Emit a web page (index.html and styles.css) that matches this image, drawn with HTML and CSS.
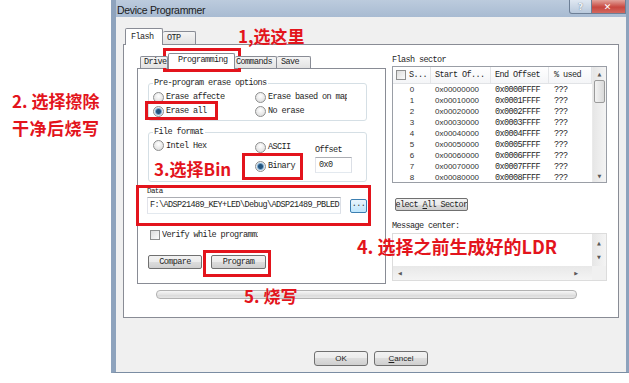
FILE: index.html
```html
<!DOCTYPE html>
<html lang="zh-CN">
<head>
    <meta charset="UTF-8">
    <title>Device Programmer</title>
    <link rel="stylesheet" href="styles.css">
</head>
<body>
    <!-- Окно программатора -->
    <div class="window">
        <div class="titlebar">
            <span class="title">Device Programmer</span>
            <div class="caption-btns">
                <span class="cap-help">?</span>
                <span class="cap-close">&#x2715;</span>
            </div>
        </div>

        <div class="client">
            <div class="tabs outer-tabs">
                <div class="tab active tab-flash">Flash</div>
                <div class="tab tab-otp">OTP</div>
            </div>

            <div class="outer-page">
                <div class="top-row">
                    <!-- Левая часть: вкладки Driver / Programming ... -->
                    <div class="inner">
                        <div class="tabs inner-tabs">
                            <div class="tab tab-driver">Driver</div>
                            <div class="tab active tab-prog">Programming</div>
                            <div class="tab tab-cmd">Commands</div>
                            <div class="tab tab-save">Save</div>
                        </div>
                        <div class="inner-page">
                            <fieldset class="group erase-group">
                                <legend>Pre-program erase options</legend>
                                <div class="opts">
                                    <label class="radio"><i></i><span class="clip w59">Erase affected sectors</span></label>
                                    <label class="radio"><i></i><span class="clip w79">Erase based on map</span></label>
                                    <label class="radio"><i class="on"></i><span class="clip w44">Erase all</span></label>
                                    <label class="radio"><i></i><span>No erase</span></label>
                                </div>
                            </fieldset>

                            <fieldset class="group format-group">
                                <legend>File format</legend>
                                <div class="format">
                                    <label class="radio hex"><i></i><span>Intel Hex</span></label>
                                    <label class="radio ascii"><i></i><span>ASCII</span></label>
                                    <span class="offset-label">Offset</span>
                                    <span></span>
                                    <label class="radio"><i class="on"></i><span>Binary</span></label>
                                    <div class="textbox offset">0x0</div>
                                </div>
                            </fieldset>

                            <div class="data-label">Data</div>
                            <div class="data-row">
                                <div class="textbox path">F:\ADSP21489_KEY+LED\Debug\ADSP21489_PBLED</div>
                                <div class="browse">...</div>
                            </div>

                            <label class="check verify"><i></i><span class="clip w96">Verify while programming</span></label>

                            <div class="btn-row">
                                <div class="btn compare">Compare</div>
                                <div class="btn program">Program</div>
                            </div>
                        </div>
                    </div>

                    <!-- Правая часть: сектора и сообщения -->
                    <div class="sector-col">
                        <div class="caption">Flash sector</div>
                        <div class="list">
                            <div class="list-body">
                                <div class="lrow head">
                                    <div class="c0"><i class="box"></i>S...</div>
                                    <div class="c1">Start Of...</div>
                                    <div class="c2">End Offset</div>
                                    <div class="c3">% used</div>
                                </div>
                                <div class="lrow"><div class="c0 num">0</div><div class="c1 num">0x00000000</div><div class="c2">0x0000FFFF</div><div class="c3">???</div></div>
                                <div class="lrow"><div class="c0 num">1</div><div class="c1 num">0x00010000</div><div class="c2">0x0001FFFF</div><div class="c3">???</div></div>
                                <div class="lrow"><div class="c0 num">2</div><div class="c1 num">0x00020000</div><div class="c2">0x0002FFFF</div><div class="c3">???</div></div>
                                <div class="lrow"><div class="c0 num">3</div><div class="c1 num">0x00030000</div><div class="c2">0x0003FFFF</div><div class="c3">???</div></div>
                                <div class="lrow"><div class="c0 num">4</div><div class="c1 num">0x00040000</div><div class="c2">0x0004FFFF</div><div class="c3">???</div></div>
                                <div class="lrow"><div class="c0 num">5</div><div class="c1 num">0x00050000</div><div class="c2">0x0005FFFF</div><div class="c3">???</div></div>
                                <div class="lrow"><div class="c0 num">6</div><div class="c1 num">0x00060000</div><div class="c2">0x0006FFFF</div><div class="c3">???</div></div>
                                <div class="lrow"><div class="c0 num">7</div><div class="c1 num">0x00070000</div><div class="c2">0x0007FFFF</div><div class="c3">???</div></div>
                                <div class="lrow"><div class="c0 num">8</div><div class="c1 num">0x00080000</div><div class="c2">0x0008FFFF</div><div class="c3">???</div></div>
                            </div>
                            <div class="vscroll">
                                <span class="arr">&#9650;</span>
                                <span class="thumb"></span>
                                <span class="arr down">&#9660;</span>
                            </div>
                        </div>

                        <div class="btn select-all"><span>Select <u>A</u>ll Sector</span></div>

                        <div class="caption msg-caption">Message center:</div>
                        <div class="msgbox">
                            <div class="msg-main">
                                <div class="msg-text"></div>
                                <div class="msg-v">
                                    <span class="arr">&#9650;</span>
                                    <span class="arr">&#9660;</span>
                                </div>
                            </div>
                            <div class="msg-h">
                                <span class="arr">&#9664;</span>
                                <span class="arr">&#9654;</span>
                                <span class="corner"></span>
                            </div>
                        </div>
                    </div>
                </div>

                <div class="progress"></div>
            </div>

            <div class="dlg-btns">
                <div class="btn dlg">OK</div>
                <div class="btn dlg"><span><u>C</u>ancel</span></div>
            </div>
        </div>
    </div>

    <!-- Пометки поверх скриншота -->
    <div class="mark m-prog"></div>
    <div class="mark m-erase"></div>
    <div class="mark m-bin"></div>
    <div class="mark m-data"></div>
    <div class="mark m-program"></div>

    <div class="note n1">1,选这里</div>
    <div class="note n2">2. 选择擦除</div>
    <div class="note n2b">干净后烧写</div>
    <div class="note n3">3.选择Bin</div>
    <div class="note n4">4. 选择之前生成好的LDR</div>
    <div class="note n5">5. 烧写</div>
</body>
</html>
```

FILE: styles.css
```css
* {
    box-sizing: border-box;
}

body {
    margin: 0;
    width: 629px;
    height: 383px;
    overflow: hidden;
    position: relative;
    background: #fff;
    font-family: "Liberation Mono", monospace;
    font-size: 8.5px;
    letter-spacing: -0.6px;
    color: #1e1e1e;
}

/* Окно */
.window {
    margin-left: 111px;
    width: 520px;
    height: 373px;
    border-left: 5px solid #8ea3bd;
    border-right: 5px solid #8ea3bd;
    border-bottom: 1px solid #7b8da3;
    background: #f0f0f0;
    display: flex;
    flex-direction: column;
}

.titlebar {
    height: 17px;
    background: linear-gradient(#bccbdd, #a8bbd2);
    display: flex;
    align-items: flex-start;
}

.title {
    font-family: "Liberation Sans", sans-serif;
    font-size: 10.5px;
    letter-spacing: -0.3px;
    line-height: 14px;
    padding-top: 3px;
    padding-left: 1px;
    color: #1b1b1b;
}

.caption-btns {
    margin-left: auto;
    display: flex;
}

.cap-help,
.cap-close {
    height: 14px;
    display: flex;
    align-items: center;
    justify-content: center;
    font-family: "DejaVu Sans", sans-serif;
    letter-spacing: 0;
    color: #fff;
    border: 1px solid #6d7f96;
    border-top: none;
}

.cap-help {
    width: 23px;
    border-radius: 0 0 0 3px;
    background: linear-gradient(#dfe7f1, #b9c9dc);
    font-size: 9px;
    font-weight: bold;
    color: #eef3f8;
    text-shadow: 0 0 1px #50627a;
}

.cap-close {
    width: 34px;
    border-left: none;
    background: linear-gradient(#e2a49c, #c8473f 55%, #d2685f);
    font-size: 9px;
    font-weight: bold;
    padding-right: 2px;
}

.client {
    flex: 1;
    padding: 11px 7px 0 7px;
    display: flex;
    flex-direction: column;
}

/* Вкладки */
.tabs {
    display: flex;
    align-items: flex-end;
    position: relative;
    z-index: 1;
}

.tab {
    height: 13px;
    border: 1px solid #898c95;
    border-bottom: none;
    border-radius: 2px 2px 0 0;
    background: linear-gradient(#f5f5f5, #e2e2e2);
    line-height: 12px;
    white-space: nowrap;
    overflow: hidden;
}

.tab.active {
    background: #fff;
    margin-bottom: -1px;
}

.outer-tabs {
    height: 16px;
    padding-left: 2px;
}

.tab-flash {
    width: 38px;
    height: 17px;
    padding-left: 5px;
    line-height: 16px;
}

.tab-otp {
    width: 33px;
    padding-left: 4px;
    border-left: none;
}

.outer-page {
    width: 496px;
    height: 274px;
    border: 1px solid #898c95;
    background: #fff;
    padding: 8px 11px 0 13px;
}

.top-row {
    display: flex;
    gap: 6px;
}

.inner {
    width: 249px;
}

.inner-tabs {
    height: 15px;
    padding-left: 3px;
}

.tab-driver {
    width: 28px;
    height: 12px;
    padding-left: 3px;
    line-height: 11px;
}

.tab-prog {
    width: 67px;
    height: 16px;
    padding-left: 9px;
    line-height: 13px;
}

.tab-cmd {
    width: 42px;
    height: 12px;
    padding-left: 1px;
    line-height: 11px;
    border-left: none;
}

.tab-save {
    width: 34px;
    height: 12px;
    padding-left: 4px;
    line-height: 11px;
    border-left: none;
}

.inner-page {
    height: 216px;
    border: 1px solid #898c95;
    background: #fff;
}

/* Группы */
.group {
    width: 219px;
    margin: 9px 0 0 10px;
    padding: 0 0 2px 4px;
    border: 1px solid #d5dfe5;
    border-radius: 3px;
}

.group legend {
    padding: 0 1px;
    line-height: 10px;
}

.opts {
    display: grid;
    grid-template-columns: 102px auto;
    grid-auto-rows: 14px;
    align-items: center;
    padding-top: 2px;
}

.radio,
.check {
    display: flex;
    align-items: center;
    gap: 2px;
    white-space: nowrap;
}

.radio i {
    width: 11px;
    height: 11px;
    flex: none;
    border-radius: 50%;
    border: 1px solid #8e8f8f;
    background: radial-gradient(circle at 50% 35%, #fff, #d6d6d6);
}

.radio i.on {
    background: radial-gradient(circle, #24547e 0 2px, #78a8cf 3px, #e4ebf1 4px);
}

.clip {
    overflow: hidden;
    white-space: nowrap;
}

.w44 { width: 44px; }
.w59 { width: 59px; }
.w79 { width: 79px; }
.w96 { width: 96px; }

.format-group {
    margin-top: 6px;
    padding-bottom: 6px;
}

.format {
    display: grid;
    grid-template-columns: 102px 60px auto;
    grid-template-rows: 20px 18px;
}

.format .hex {
    align-self: start;
    margin-top: 3px;
}

.format .ascii {
    align-self: center;
}

.offset-label {
    align-self: end;
    padding-bottom: 2px;
}

.textbox {
    border: 1px solid #abadb3;
    border-color: #abadb3 #dbdfe6 #e3e9ef #e2e3ea;
    background: #fff;
    white-space: nowrap;
    overflow: hidden;
}

.offset {
    width: 37px;
    height: 16px;
    padding-left: 3px;
    line-height: 14px;
}

.data-label {
    margin: 5px 0 0 9px;
    line-height: 9px;
    font-size: 7.5px;
}

.data-row {
    display: flex;
    align-items: center;
    margin: 1px 0 0 9px;
}

.path {
    width: 194px;
    height: 17px;
    padding-left: 2px;
    line-height: 15px;
}

.browse {
    width: 17px;
    height: 14px;
    margin-left: 9px;
    border: 1px solid #3c7fb1;
    border-radius: 2px;
    background: linear-gradient(#eaf6fd, #bee6fd);
    line-height: 8px;
    text-align: center;
    color: #333;
}

.check i {
    width: 10px;
    height: 10px;
    flex: none;
    border: 1px solid #8e8f8f;
    background: linear-gradient(135deg, #dcdcdc, #fbfbfb);
}

.verify {
    margin: 16px 0 0 12px;
    height: 10px;
}

.btn-row {
    display: flex;
    margin: 15px 0 0 10px;
    gap: 9px;
}

.btn {
    height: 14px;
    border: 1px solid #707070;
    border-radius: 2px;
    background: linear-gradient(#f2f2f2, #ebebeb 50%, #dddddd 50%, #cfcfcf);
    display: flex;
    align-items: center;
    justify-content: center;
    white-space: nowrap;
    overflow: hidden;
}

.compare { width: 54px; }
.program { width: 55px; }

/* Сектора */
.sector-col {
    width: 215px;
    display: flex;
    flex-direction: column;
}

.caption {
    margin-top: 3px;
    line-height: 9px;
}

.list {
    margin-top: 1px;
    height: 117px;
    border: 1px solid #9a9ea6;
    display: flex;
    overflow: hidden;
}

.list-body {
    flex: 1;
}

.lrow {
    display: flex;
    height: 11px;
    align-items: center;
}

.lrow.head {
    height: 17px;
    background: linear-gradient(#fff, #f4f5f7);
    border-bottom: 1px solid #e1e3e6;
}

.lrow > div {
    height: 100%;
    display: flex;
    align-items: center;
    white-space: nowrap;
}

.head > div {
    border-right: 1px solid #e3e5e8;
}

.c0 { width: 38px; justify-content: center; }
.c1 { width: 60px; padding-left: 4px; }
.c2 { width: 58px; padding-left: 4px; }
.c3 { width: 43px; padding-left: 5px; }

.head .c0 {
    justify-content: flex-start;
    padding-left: 3px;
    gap: 3px;
}

.box {
    width: 10px;
    height: 10px;
    border: 1px solid #8e8f8f;
    background: linear-gradient(135deg, #dcdcdc, #fbfbfb);
}

.num {
    font-family: "Liberation Sans", sans-serif;
    font-size: 8px;
    letter-spacing: 0;
    color: #333;
}

.vscroll,
.msg-v {
    width: 14px;
    background: linear-gradient(90deg, #e6e6e6, #f4f4f4);
    display: flex;
    flex-direction: column;
    align-items: center;
}

.vscroll {
    border-left: 1px solid #eaeaea;
}

.arr {
    font-family: "DejaVu Sans", sans-serif;
    font-size: 5px;
    letter-spacing: 0;
    color: #5a5a5a;
    line-height: 8px;
}

.vscroll .arr {
    margin-top: 3px;
}

.vscroll .arr.down {
    margin-top: auto;
    margin-bottom: 2px;
}

.thumb {
    width: 11px;
    height: 23px;
    margin-top: 2px;
    border: 1px solid #9b9b9b;
    border-radius: 2px;
    background: linear-gradient(90deg, #f2f2f2, #dadada);
}

.select-all {
    width: 73px;
    height: 13px;
    margin: 15px 0 0 3px;
    justify-content: flex-start;
}

.select-all span {
    margin-left: -5px;
}

.msg-caption {
    margin-top: 11px;
}

.msgbox {
    margin-top: 2px;
    height: 48px;
    border: 1px solid #dcdcdc;
    display: flex;
    flex-direction: column;
}

.msg-main {
    flex: 1;
    display: flex;
}

.msg-text {
    flex: 1;
    background: #fff;
}

.msg-v {
    justify-content: space-around;
    padding: 2px 0;
}

.msg-h {
    height: 14px;
    display: flex;
    align-items: center;
    background: linear-gradient(#e8e8e8, #f4f4f4);
    padding-left: 5px;
}

.msg-h .arr:nth-child(2) {
    margin-left: auto;
    margin-right: 14px;
}

.corner {
    width: 14px;
    height: 14px;
    background: #f0f0f0;
}

.progress {
    width: 421px;
    height: 9px;
    margin: 6px 0 0 19px;
    border: 1px solid #b2b2b2;
    border-radius: 4px;
    background: linear-gradient(#f6f6f6, #e4e4e4 50%, #d8d8d8 51%, #e6e6e6);
}

/* Кнопки OK / Cancel */
.dlg-btns {
    display: flex;
    justify-content: center;
    gap: 6px;
    margin-top: 33px;
}

.btn.dlg {
    width: 54px;
    height: 15px;
    font-family: "Liberation Sans", sans-serif;
    font-size: 8px;
    letter-spacing: 0;
    border-radius: 3px;
}

/* Красные пометки */
.mark {
    position: absolute;
    border: 3px solid #e3141c;
}

.m-prog { left: 163px; top: 48px; width: 78px; height: 24px; }
.m-erase { left: 145px; top: 101px; width: 73px; height: 19px; }
.m-bin { left: 242px; top: 153px; width: 61px; height: 27px; }
.m-data { left: 136px; top: 185px; width: 235px; height: 41px; }
.m-program { left: 203px; top: 250px; width: 68px; height: 27px; }

.note {
    position: absolute;
    font-family: "Noto Sans CJK SC", sans-serif;
    font-weight: bold;
    font-size: 17px;
    line-height: 18px;
    letter-spacing: 0;
    color: #e3141c;
    white-space: nowrap;
}

.n1 { left: 238px; top: 27px; }
.n2 { left: 12px; top: 92px; }
.n2b { left: 12px; top: 119px; letter-spacing: 0.5px; }
.n3 { left: 154px; top: 160px; }
.n4 { left: 357px; top: 237px; font-size: 18px; }
.n5 { left: 244px; top: 287px; }
```
